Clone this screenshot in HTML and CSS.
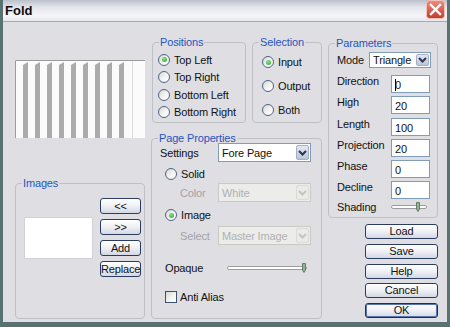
FILE: index.html
```html
<!DOCTYPE html>
<html lang="en">
<head>
    <meta charset="UTF-8">
    <title>Fold</title>
    <link rel="stylesheet" href="styles.css">
</head>
<body>
    <div class="window">
        <div class="titlebar">
            <span class="title">Fold</span>
            <span class="close">
                <svg width="19" height="19" viewBox="0 0 19 19">
                    <defs>
                        <linearGradient id="cg" x1="0" y1="0" x2="0" y2="1">
                            <stop offset="0" stop-color="#ee8f80"/>
                            <stop offset="1" stop-color="#c13b2c"/>
                        </linearGradient>
                    </defs>
                    <rect x="0.5" y="0.5" width="18" height="18" rx="3" fill="url(#cg)" stroke="#f3c2ba"/>
                    <path d="M5 5L14 14M14 5L5 14" stroke="#fff" stroke-width="2.4" stroke-linecap="square"/>
                </svg>
            </span>
        </div>

        <div class="dialog">
            <!-- left column: preview + images -->
            <div class="col col-left">
                <div class="preview">
                    <svg width="130" height="78" viewBox="0 0 130 78">
                        <rect width="130" height="78" fill="#fbfbfb"/>
                        <path d="M0.5 78V0.5H130" stroke="#9c9c9c" fill="none"/>
                        <line x1="117.5" y1="1" x2="117.5" y2="78" stroke="#dcdcdc"/>
                        <g fill="#ababab">
                            <polygon points="8,5 13,2 13,78 8,78"/>
                            <polygon points="20,5 25,2 25,78 20,78"/>
                            <polygon points="32,5 37,2 37,78 32,78"/>
                            <polygon points="44,5 49,2 49,78 44,78"/>
                            <polygon points="56,5 61,2 61,78 56,78"/>
                            <polygon points="68,5 73,2 73,78 68,78"/>
                            <polygon points="80,5 85,2 85,78 80,78"/>
                            <polygon points="92,5 97,2 97,78 92,78"/>
                            <polygon points="104,5 109,2 109,78 104,78"/>
                        </g>
                    </svg>
                </div>

                <fieldset class="group images">
                    <legend>Images</legend>
                    <div class="images-body">
                        <div class="listbox"></div>
                        <div class="btn-stack">
                            <button class="btn small">&lt;&lt;</button>
                            <button class="btn small">&gt;&gt;</button>
                            <button class="btn small">Add</button>
                            <button class="btn small">Replace</button>
                        </div>
                    </div>
                </fieldset>
            </div>

            <!-- middle column -->
            <div class="col col-mid">
                <div class="top-groups">
                    <fieldset class="group positions">
                        <legend>Positions</legend>
                        <div class="group-body">
                            <div class="opt"><span class="radio on"></span>Top Left</div>
                            <div class="opt"><span class="radio"></span>Top Right</div>
                            <div class="opt"><span class="radio"></span>Bottom Left</div>
                            <div class="opt"><span class="radio"></span>Bottom Right</div>
                        </div>
                    </fieldset>
                    <fieldset class="group selection">
                        <legend>Selection</legend>
                        <div class="group-body">
                            <div class="opt"><span class="radio on"></span>Input</div>
                            <div class="opt"><span class="radio"></span>Output</div>
                            <div class="opt"><span class="radio"></span>Both</div>
                        </div>
                    </fieldset>
                </div>

                <fieldset class="group page">
                    <legend>Page Properties</legend>
                    <div class="group-body">
                        <div class="row settings-row">
                            <span class="lbl w-settings">Settings</span>
                            <div class="select wide">
                                <span class="value">Fore Page</span>
                                <span class="drop">
                                    <svg width="9" height="6" viewBox="0 0 9 6"><path d="M1 1L4.5 4.5L8 1" stroke="currentColor" stroke-width="2" fill="none"/></svg>
                                </span>
                            </div>
                        </div>
                        <div class="opt solid-row"><span class="radio"></span>Solid</div>
                        <div class="row color-row">
                            <span class="lbl dim w-sub">Color</span>
                            <div class="select wide disabled">
                                <span class="value">White</span>
                                <span class="drop">
                                    <svg width="9" height="6" viewBox="0 0 9 6"><path d="M1 1L4.5 4.5L8 1" stroke="currentColor" stroke-width="2" fill="none"/></svg>
                                </span>
                            </div>
                        </div>
                        <div class="opt image-row"><span class="radio on"></span>Image</div>
                        <div class="row select-row">
                            <span class="lbl dim w-sub">Select</span>
                            <div class="select wide disabled">
                                <span class="value">Master Image</span>
                                <span class="drop">
                                    <svg width="9" height="6" viewBox="0 0 9 6"><path d="M1 1L4.5 4.5L8 1" stroke="currentColor" stroke-width="2" fill="none"/></svg>
                                </span>
                            </div>
                        </div>
                        <div class="row opaque-row">
                            <span class="lbl w-opaque">Opaque</span>
                            <svg width="80" height="10" viewBox="0 0 80 10">
                                <rect x="0.5" y="3.5" width="79" height="3" rx="1.5" fill="#fff" stroke="#9d9d9d"/>
                                <path d="M75.5 0.5H78.5V7L77 9.5L75.5 7Z" fill="#93b393" stroke="#5f7f62"/>
                            </svg>
                        </div>
                        <div class="opt check-row"><span class="checkbox"></span>Anti Alias</div>
                    </div>
                </fieldset>
            </div>

            <!-- right column -->
            <div class="col col-right">
                <fieldset class="group params">
                    <legend>Parameters</legend>
                    <div class="group-body">
                        <div class="row mode-row">
                            <span class="lbl w-mode">Mode</span>
                            <div class="select mode">
                                <span class="value">Triangle</span>
                                <span class="drop">
                                    <svg width="9" height="6" viewBox="0 0 9 6"><path d="M1 1L4.5 4.5L8 1" stroke="currentColor" stroke-width="2" fill="none"/></svg>
                                </span>
                            </div>
                        </div>
                        <div class="param first"><span class="lbl w-param">Direction</span><span class="field"><span class="caret"></span>0</span></div>
                        <div class="param"><span class="lbl w-param">High</span><span class="field">20</span></div>
                        <div class="param"><span class="lbl w-param">Length</span><span class="field">100</span></div>
                        <div class="param"><span class="lbl w-param">Projection</span><span class="field">20</span></div>
                        <div class="param"><span class="lbl w-param">Phase</span><span class="field">0</span></div>
                        <div class="param"><span class="lbl w-param">Decline</span><span class="field">0</span></div>
                        <div class="row shading-row">
                            <span class="lbl w-param">Shading</span>
                            <svg width="36" height="10" viewBox="0 0 36 10">
                                <rect x="0.5" y="3.5" width="35" height="3" rx="1.5" fill="#fff" stroke="#9d9d9d"/>
                                <path d="M25.5 0.5H28.5V7L27 9.5L25.5 7Z" fill="#93b393" stroke="#5f7f62"/>
                            </svg>
                        </div>
                    </div>
                </fieldset>

                <div class="actions">
                    <button class="btn wide-btn">Load</button>
                    <button class="btn wide-btn">Save</button>
                    <button class="btn wide-btn">Help</button>
                    <button class="btn wide-btn">Cancel</button>
                    <button class="btn wide-btn default">OK</button>
                </div>
            </div>
        </div>
    </div>
</body>
</html>
```

FILE: styles.css
```css
* {
    box-sizing: border-box;
}

body {
    margin: 0;
    background-color: #577270;
    font-family: "Liberation Sans", Arial, sans-serif;
    font-size: 11px;
    letter-spacing: -0.15px;
    color: #111;
}

.window {
    width: 450px;
    height: 327px;
    padding: 0 3px 5px 3px;
    display: flex;
    flex-direction: column;
}

/* title bar */
.titlebar {
    height: 22px;
    padding: 0 2px 0 2px;
    display: flex;
    align-items: center;
    justify-content: space-between;
    border-bottom: 1px solid #a6a8b2;
    background: linear-gradient(#bcc0cb 0%, #e4e6ec 35%, #f6f6f9 75%, #e6e7ec 100%);
}

.title {
    font-weight: bold;
    font-size: 13px;
    letter-spacing: 0;
    color: #0c0c0c;
    margin-top: -1px;
}

.close {
    display: flex;
    margin-top: -2px;
}

/* dialog body */
.dialog {
    flex: 1;
    background-color: #dfdfe3;
    display: flex;
    gap: 6px;
    padding: 15px 0 0 12px;
}

.col {
    display: flex;
    flex-direction: column;
}

.col-left {
    width: 130px;
}

.col-mid {
    width: 171px;
}

.col-right {
    width: 110px;
    margin-top: 1px;
}

.preview {
    margin-top: 23px;
    height: 78px;
    display: flex;
}

/* group boxes */
.group {
    margin: 0;
    padding: 0;
    border: 1px solid #bfbfc6;
    border-radius: 4px;
    min-width: 0;
}

.group legend {
    margin-left: 6px;
    padding: 0 1px;
    line-height: 10px;
    color: #2456c0;
}

.images {
    margin-top: 40px;
    height: 141px;
}

.images-body {
    display: flex;
    align-items: center;
    gap: 7px;
    padding: 10px 0 0 8px;
}

.listbox {
    width: 69px;
    height: 42px;
    background: #fff;
    border: 1px solid #d2d2d6;
}

.btn-stack {
    display: flex;
    flex-direction: column;
    gap: 5px;
}

.top-groups {
    display: flex;
    gap: 6px;
}

.positions {
    width: 94px;
    height: 86px;
    margin-left: 1px;
}

.positions .group-body {
    padding: 4px 0 0 5px;
}

.positions .opt {
    height: 17.5px;
}

.selection {
    width: 70px;
    height: 86px;
}

.selection .group-body {
    padding: 3px 0 0 9px;
}

.selection .opt {
    height: 24px;
}

.opt {
    display: flex;
    align-items: center;
    gap: 4px;
    white-space: nowrap;
}

.radio {
    width: 12px;
    height: 12px;
    flex: none;
    border-radius: 50%;
    border: 1px solid #4f6285;
    background: linear-gradient(135deg, #d6d6d2 0%, #f4f4f2 55%, #fff 100%);
    display: flex;
    align-items: center;
    justify-content: center;
}

.radio.on::after {
    content: "";
    width: 5px;
    height: 5px;
    border-radius: 50%;
    background: radial-gradient(circle at 40% 35%, #8ee08e, #23a323);
}

.checkbox {
    width: 12px;
    height: 12px;
    flex: none;
    border: 1px solid #3e5070;
    background: linear-gradient(135deg, #d6d6d2 0%, #f4f4f2 55%, #fff 100%);
    margin-right: -1px;
}

/* page properties */
.page {
    margin-top: 10px;
    height: 186px;
}

.page .group-body {
    padding-left: 8px;
}

.row {
    display: flex;
    align-items: center;
}

.lbl {
    flex: none;
    white-space: nowrap;
    line-height: 12px;
}

.lbl.dim {
    color: #a2a2a6;
}

.w-settings {
    width: 58px;
}

.w-sub {
    width: 38px;
    margin-left: 20px;
}

.w-opaque {
    width: 62px;
    margin-left: 5px;
}

.settings-row {
    height: 19px;
}

.solid-row {
    height: 14px;
    margin-top: 5px;
    padding-left: 5px;
}

.color-row {
    height: 19px;
    margin-top: 2px;
}

.image-row {
    height: 14px;
    margin-top: 6px;
    padding-left: 5px;
}

.select-row {
    height: 19px;
    margin-top: 4px;
}

.opaque-row {
    height: 14px;
    margin-top: 16px;
}

.check-row {
    height: 14px;
    margin-top: 15px;
    padding-left: 5px;
}

/* drop-down boxes */
.select {
    display: flex;
    align-items: stretch;
    background: #fff;
    border: 1px solid #7f9db9;
    color: #111;
}

.select.wide {
    width: 93px;
    height: 19px;
}

.select.mode {
    width: 62px;
    height: 16px;
}

.select .value {
    flex: 1;
    padding-left: 3px;
    display: flex;
    align-items: center;
    white-space: nowrap;
    overflow: hidden;
}

.select .drop {
    width: 13px;
    margin: 1px;
    border: 1px solid #a6b0c4;
    border-radius: 2px;
    background: linear-gradient(#e4e8f2, #bcc5d8);
    color: #2b3550;
    display: flex;
    align-items: center;
    justify-content: center;
}

.select.disabled {
    background: #ececea;
    border-color: #cacac4;
    color: #b0b0b0;
}

.select.disabled .drop {
    background: #eaeae8;
    border-color: #dadad6;
    color: #c4c4c4;
}

/* parameters */
.params {
    height: 180px;
}

.params .group-body {
    padding-left: 8px;
}

.mode-row {
    margin-top: 4px;
    height: 16px;
}

.w-mode {
    width: 32px;
}

.param {
    display: flex;
    align-items: flex-start;
    margin-top: 3.25px;
}

.param.first {
    margin-top: 7px;
}

.w-param {
    width: 54px;
}

.field {
    width: 39px;
    height: 18px;
    border: 1px solid #7f9db9;
    background: #fff;
    padding: 2px 0 0 3px;
    line-height: 14px;
    display: flex;
    align-items: center;
}

.caret {
    width: 1px;
    height: 12px;
    background: #000;
    margin-right: -1px;
}

.shading-row {
    margin-top: 1.5px;
    height: 12px;
}

/* buttons */
.btn {
    display: block;
    padding: 0;
    font-family: inherit;
    font-size: 11px;
    letter-spacing: -0.15px;
    color: #111;
    border: 1px solid #2b3c5e;
    border-radius: 3px;
    background: linear-gradient(#ffffff 0%, #f1f2f6 45%, #d3d8e4 100%);
    line-height: 13px;
}

.btn.small {
    width: 41px;
    height: 16px;
}

.actions {
    margin-top: 6px;
    display: flex;
    flex-direction: column;
    align-items: flex-end;
    gap: 4.75px;
}

.btn.wide-btn {
    width: 73px;
    height: 15px;
}

.btn.default {
    border-color: #1f2f52;
    box-shadow: inset 0 0 0 1px #5876ad;
}
```
